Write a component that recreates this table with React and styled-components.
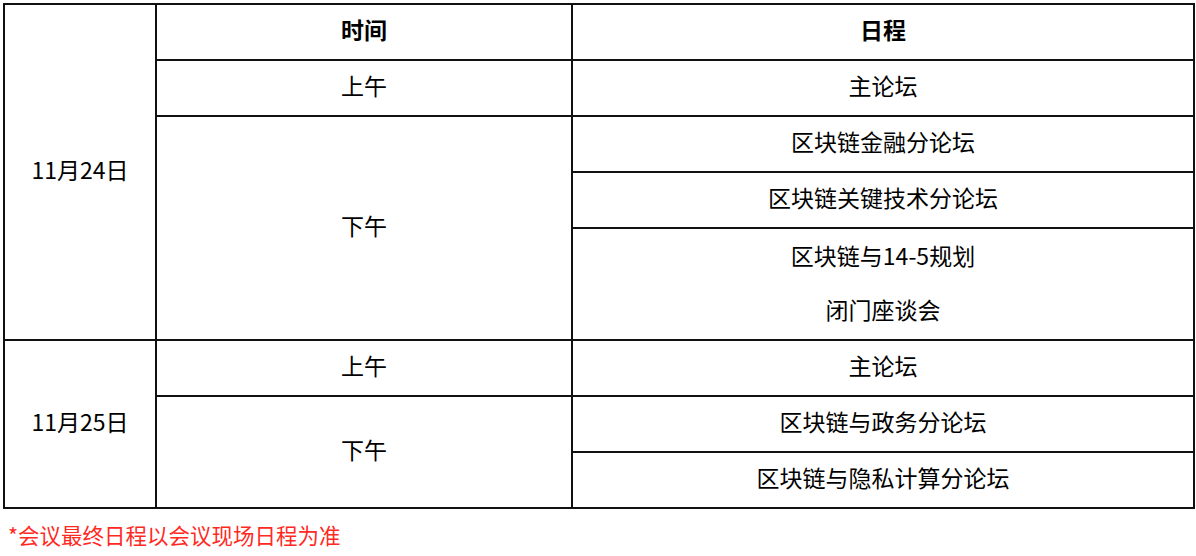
import React from "react";
import styled, { createGlobalStyle } from "styled-components";

const GlobalStyle = createGlobalStyle`
  html, body {
    margin: 0;
    padding: 0;
    background: #fff;
  }
  body {
    font-family: "Noto Sans CJK SC", "Noto Sans", sans-serif;
    color: #000;
  }
`;

const Page = styled.div`
  padding: 3px 3px 0 3px;
  width: 1190px;
`;

const Table = styled.table`
  width: 1190px;
  table-layout: fixed;
  border-collapse: collapse;
  border: 2px solid #111;
`;

const Row = styled.tr`
  height: 56px;
`;

const Cell = styled.td`
  border: 2px solid #111;
  padding: ${(p) => (p.$multi ? "0" : "0 0 6px 0")};
  text-align: center;
  vertical-align: middle;
  font-size: 23px;
  font-weight: ${(p) => (p.$head ? 700 : 400)};
  line-height: 1;
`;

const Line = styled.div`
  height: 54px;
  line-height: 50px;
`;

const Note = styled.p`
  margin: 0;
  padding: 4px 0 0 5px;
  height: 44px;
  line-height: 44px;
  font-size: 21.5px;
  color: #ff2a1f;
`;

const App = () => {
  return (
    <>
      <GlobalStyle />
      <Page>
        <Table>
          <colgroup>
            <col style={{ width: 152 }} />
            <col style={{ width: 416 }} />
            <col style={{ width: 622 }} />
          </colgroup>
          <tbody>
            <Row>
              <Cell rowSpan={6}>11月24日</Cell>
              <Cell $head>时间</Cell>
              <Cell $head>日程</Cell>
            </Row>
            <Row>
              <Cell>上午</Cell>
              <Cell>主论坛</Cell>
            </Row>
            <Row>
              <Cell rowSpan={4}>下午</Cell>
              <Cell>区块链金融分论坛</Cell>
            </Row>
            <Row>
              <Cell>区块链关键技术分论坛</Cell>
            </Row>
            <Row>
              <Cell rowSpan={2} $multi>
                <Line>区块链与14-5规划</Line>
                <Line>闭门座谈会</Line>
              </Cell>
            </Row>
            <Row />
            <Row>
              <Cell rowSpan={3}>11月25日</Cell>
              <Cell>上午</Cell>
              <Cell>主论坛</Cell>
            </Row>
            <Row>
              <Cell rowSpan={2}>下午</Cell>
              <Cell>区块链与政务分论坛</Cell>
            </Row>
            <Row>
              <Cell>区块链与隐私计算分论坛</Cell>
            </Row>
          </tbody>
        </Table>
        <Note>*会议最终日程以会议现场日程为准</Note>
      </Page>
    </>
  );
};

export default App;
